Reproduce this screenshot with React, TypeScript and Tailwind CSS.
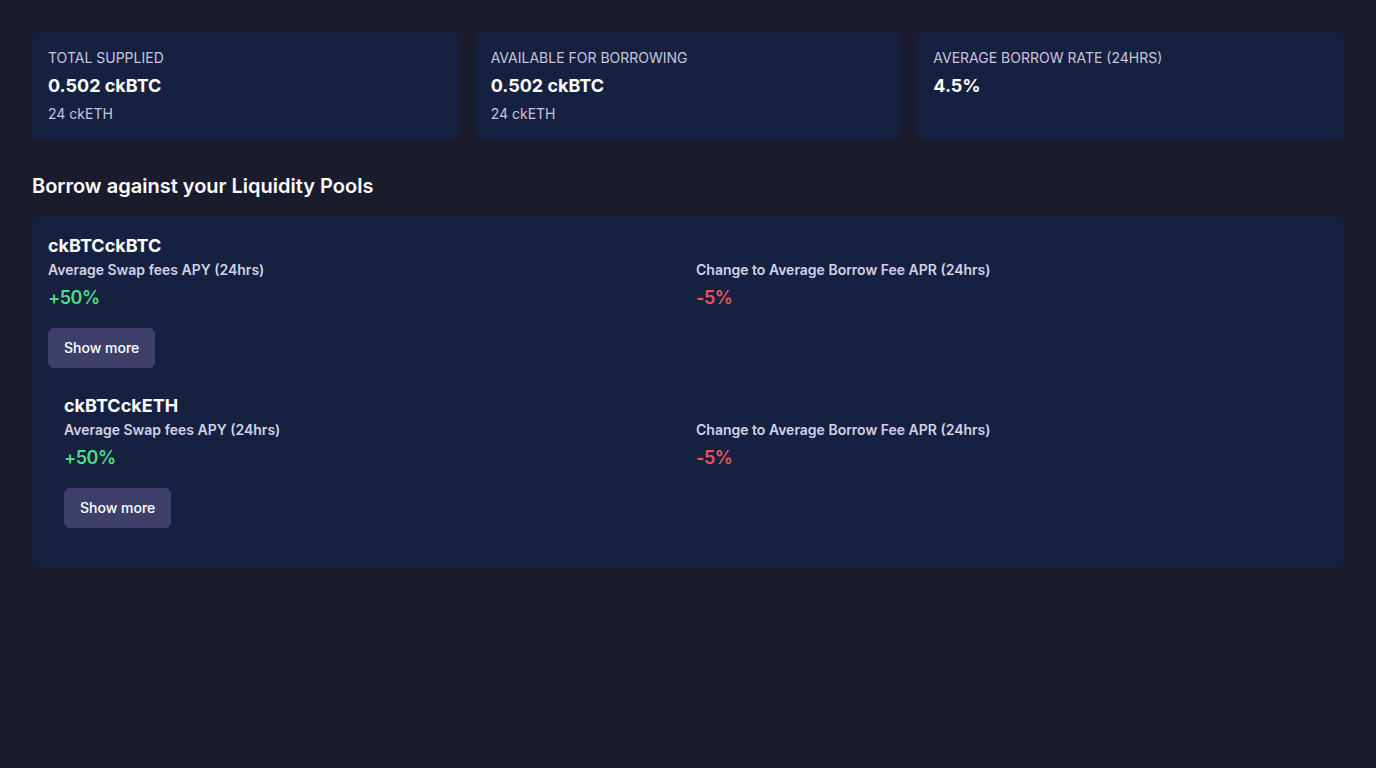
import React from "react";

const stats = [
  { label: "TOTAL SUPPLIED", value: "0.502 ckBTC", sub: "24 ckETH" },
  { label: "AVAILABLE FOR BORROWING", value: "0.502 ckBTC", sub: "24 ckETH" },
  { label: "AVERAGE BORROW RATE (24HRS)", value: "4.5%" },
];

const pools = [
  { name: "ckBTCckBTC", apy: "+50%", change: "-5%" },
  { name: "ckBTCckETH", apy: "+50%", change: "-5%" },
];

const PoolItem: React.FC<{ name: string; apy: string; change: string }> = ({ name, apy, change }) => (
  <div>
    <h3 className="text-lg font-bold text-white">{name}</h3>
    <div className="grid grid-cols-2 gap-4">
      <div>
        <p className="text-sm font-semibold text-[#d4d0e6]">Average Swap fees APY (24hrs)</p>
        <p className="mt-1 text-lg font-semibold tracking-tight text-[#4ade80]">{apy}</p>
      </div>
      <div>
        <p className="text-sm font-semibold text-[#d4d0e6]">Change to Average Borrow Fee APR (24hrs)</p>
        <p className="mt-1 text-lg font-semibold tracking-tight text-[#ea5455]">{change}</p>
      </div>
    </div>
    <button className="mt-4 h-10 rounded-md bg-[#3e3f68] px-4 text-sm font-medium text-white">
      Show more
    </button>
  </div>
);

export default function App() {
  return (
    <div
      className="min-h-screen bg-[#1b1b2e] p-8 text-white"
      style={{ fontFamily: "Inter, 'Noto Sans', sans-serif" }}
    >
      <div className="grid grid-cols-3 gap-4">
        {stats.map((s) => (
          <div key={s.label} className="flex flex-col gap-1 rounded-lg bg-[#162040] p-4">
            <p className="text-sm text-[#c9c6dc]">{s.label}</p>
            <p className="text-lg font-bold text-white">{s.value}</p>
            {s.sub && <p className="text-sm text-[#c9c6dc]">{s.sub}</p>}
          </div>
        ))}
      </div>

      <h2 className="mt-8 mb-4 text-xl font-semibold text-white">Borrow against your Liquidity Pools</h2>

      <div className="rounded-lg bg-[#162040] p-4">
        <PoolItem {...pools[0]} />
        <div className="my-2 p-4">
          <PoolItem {...pools[1]} />
        </div>
      </div>
    </div>
  );
}
